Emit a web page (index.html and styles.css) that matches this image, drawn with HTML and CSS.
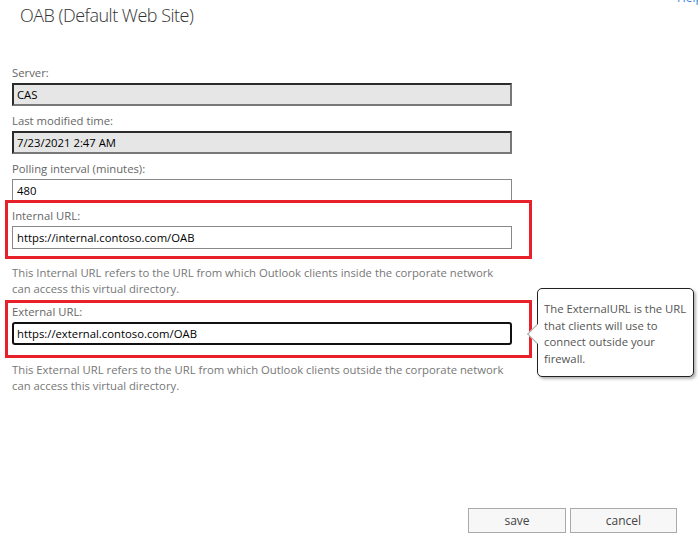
FILE: index.html
```html
<!DOCTYPE html>
<html lang="en">
<head>
    <meta charset="UTF-8">
    <title>OAB (Default Web Site)</title>
    <link rel="stylesheet" href="styles.css">
</head>
<body>

<a href="" class="help">Help</a>

<div class="page">
    <h1 class="title">OAB (Default Web Site)</h1>

    <div class="form">
        <div class="field">
            <label>Server:</label>
            <input type="text" class="box readonly" value="CAS" readonly>
        </div>
        <div class="field">
            <label>Last modified time:</label>
            <input type="text" class="box readonly" value="7/23/2021 2:47 AM" readonly>
        </div>
        <div class="field">
            <label>Polling interval (minutes):</label>
            <input type="text" class="box" value="480">
        </div>

        <div class="mark mark-internal">
            <label>Internal URL:</label>
            <input type="text" class="box" value="https://internal.contoso.com/OAB">
        </div>
        <p class="note note-internal">This Internal URL refers to the URL from which Outlook clients inside the corporate network can access this virtual directory.</p>

        <div class="mark mark-external">
            <label>External URL:</label>
            <input type="text" class="box active" value="https://external.contoso.com/OAB">
            <div class="tip">The ExternalURL is the URL that clients will use to connect outside your firewall.</div>
        </div>
        <p class="note">This External URL refers to the URL from which Outlook clients outside the corporate network can access this virtual directory.</p>
    </div>

    <div class="buttons">
        <button class="btn btn-save">save</button>
        <button class="btn btn-cancel">cancel</button>
    </div>
</div>

</body>
</html>
```

FILE: styles.css
```css
html, body, div, h1, p, label {
    margin: 0;
    padding: 0;
}
body {
    font-family: "Open Sans", "Liberation Sans", sans-serif;
    font-size: 11.3px;
    color: #666;
    background-color: #fff;
    position: relative;
}
.help {
    position: absolute;
    top: -11px;
    left: 677px;
    color: #3a8ad8;
    text-decoration: none;
    font-size: 12px;
}
.page {
    display: flex;
    flex-direction: column;
    min-height: 100vh;
    box-sizing: border-box;
    padding-bottom: 2px;
}
.title {
    font-weight: 300;
    font-size: 18px;
    letter-spacing: -0.5px;
    color: #333;
    line-height: 26px;
    padding: 2px 0 0 20px;
    height: 65px;
    box-sizing: border-box;
}
.form {
    width: 500px;
    margin-left: 12px;
}
label {
    display: block;
    line-height: 16px;
    height: 16px;
    margin-bottom: 2px;
}
.field {
    margin-bottom: 7px;
}
.box {
    display: block;
    width: 100%;
    height: 23px;
    box-sizing: border-box;
    margin: 0;
    padding: 0 4px;
    font-family: inherit;
    font-size: 11.3px;
    color: #000;
    background-color: #fff;
    border: 1px solid #888;
    outline: none;
}
.readonly {
    background-color: #e6e6e6;
    border-width: 2px;
    border-color: #2b2b2b #777 #777 #2b2b2b;
    padding-left: 3px;
}
.active {
    border: 2px solid #111;
    border-radius: 3px;
    padding-left: 3px;
}
.mark {
    position: relative;
    border: 3px solid #e8202a;
    margin: -9px -20px 0 -7px;
    padding: 5px 17px 7px 4px;
}
.mark-external {
    margin-top: 3px;
    padding: 1px 17px 10px 4px;
}
.note {
    color: #777;
    line-height: 16px;
    margin-top: 6px;
}
.mark-external + .note {
    margin-top: 4px;
}
.tip {
    position: absolute;
    left: 529px;
    top: -15px;
    width: 157px;
    height: 89px;
    box-sizing: border-box;
    padding: 12px 2px 0 6px;
    background-color: #fff;
    border: 1px solid #222;
    border-radius: 5px;
    box-shadow: 2px 2px 3px rgba(0,0,0,.3);
    color: #555;
    font-size: 11.3px;
    line-height: 16.5px;
}
.tip::before {
    content: "";
    position: absolute;
    left: -8px;
    top: 38px;
    width: 13px;
    height: 13px;
    background-color: #fff;
    border-left: 1px solid #aaa;
    border-bottom: 1px solid #aaa;
    transform: rotate(45deg);
}
.buttons {
    margin-top: auto;
    display: flex;
    justify-content: flex-end;
    gap: 4px;
    padding-right: 21px;
}
.btn {
    height: 25px;
    font-family: inherit;
    font-size: 12px;
    color: #444;
    background-color: #f7f7f7;
    border: 1px solid #aaa;
    padding: 0;
}
.btn-save {
    width: 98px;
}
.btn-cancel {
    width: 107px;
}
```
